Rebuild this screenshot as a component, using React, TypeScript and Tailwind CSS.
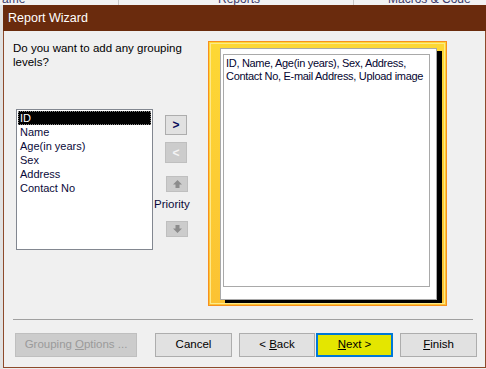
import { ReactNode } from "react";

function WinButton({
  children,
  className = "",
}: {
  children: ReactNode;
  className?: string;
}) {
  return (
    <div
      className={`flex h-[24px] items-center justify-center border text-[11.5px] ${className}`}
    >
      {children}
    </div>
  );
}

function ArrowIcon({ up }: { up: boolean }) {
  return (
    <svg width="9" height="8" viewBox="0 0 9 8">
      {up ? (
        <path d="M4.5 0 L9 4.5 L6.5 4.5 L6.5 8 L2.5 8 L2.5 4.5 L0 4.5 Z" fill="#8c8c8c" />
      ) : (
        <path d="M4.5 8 L9 3.5 L6.5 3.5 L6.5 0 L2.5 0 L2.5 3.5 L0 3.5 Z" fill="#8c8c8c" />
      )}
    </svg>
  );
}

export default function App() {
  const fields = ["ID", "Name", "Age(in years)", "Sex", "Address", "Contact No"];

  return (
    <div className="relative h-[369px] w-[486px] overflow-hidden bg-[#ececec] font-['Liberation_Sans',sans-serif] text-black">
      {/* application behind the dialog */}
      <div className="absolute left-0 top-0 h-[5px] w-[486px] overflow-hidden bg-[#f2f2f2]">
        <span className="absolute left-[2px] top-[-10px] text-[12px] text-[#3b3b6b]">ame</span>
        <div className="absolute left-[118px] top-0 h-[5px] w-px bg-[#c8c8c8]" />
        <span className="absolute left-[218px] top-[-10px] text-[12px] text-[#3b3b6b]">Reports</span>
        <div className="absolute left-[353px] top-0 h-[5px] w-px bg-[#c8c8c8]" />
        <span className="absolute left-[388px] top-[-10px] text-[12px] text-[#3b3b6b]">Macros &amp; Code</span>
      </div>
      <div className="absolute left-0 top-[5px] h-[364px] w-[3px] bg-[#e2e2e2]" />

      {/* dialog window */}
      <div className="absolute left-[3px] top-[5px] flex h-[363px] w-[483px] flex-col border-x border-b border-[#8d4a2b] bg-[#f0f0f0]">
        <div className="-mx-px flex h-[26px] items-center bg-[#6a2b0d] pl-[5px] text-[12.5px] text-white">
          Report Wizard
        </div>

        <div className="flex pt-[10px]">
          <div className="w-[204px]">
            <p className="ml-[9px] w-[180px] text-[11.5px] leading-[14px]">
              Do you want to add any grouping levels?
            </p>
            <div className="mt-[40px] flex">
              <div className="ml-[12px] h-[141px] w-[137px] border border-[#828790] bg-white p-px text-[11px] leading-[14px]">
                {fields.map((f, i) => (
                  <div
                    key={f}
                    className={`h-[14px] pl-[2px] ${
                      i === 0 ? "bg-black text-white outline-1 outline-dotted outline-[#888] -outline-offset-1" : "text-[#0a0a3a]"
                    }`}
                  >
                    {f}
                  </div>
                ))}
              </div>
              <div className="flex flex-col">
                <div className="ml-[12px] mt-[6px] flex h-[20px] w-[22px] items-center justify-center border border-[#adadad] bg-[#e1e1e1] text-[12px] font-bold text-[#0a0a5a]">
                  &gt;
                </div>
                <div className="ml-[12px] mt-[7px] flex h-[21px] w-[22px] items-center justify-center border border-[#bfbfbf] bg-[#cccccc] text-[12px] font-bold text-[#f4f4f4]">
                  &lt;
                </div>
                <div className="ml-[13px] mt-[13px] flex h-[16px] w-[22px] items-center justify-center border border-[#bfbfbf] bg-[#cccccc]">
                  <ArrowIcon up />
                </div>
                <div className="ml-px mt-[5px] text-[11.5px] leading-[14px] text-[#0a0a3a]">Priority</div>
                <div className="ml-[13px] mt-[10px] flex h-[16px] w-[22px] items-center justify-center border border-[#bfbfbf] bg-[#cccccc]">
                  <ArrowIcon up={false} />
                </div>
              </div>
            </div>
          </div>

          {/* report preview */}
          <div className="h-[265px] w-[239px] border border-[#f7901e] bg-gradient-to-b from-[#fdd835] to-[#fbc233] p-px">
            <div className="h-full w-full border border-[#fde98a] pl-[9px] pt-[4px]">
              <div className="h-[252px] w-[217px] border border-[#a9a9a9] bg-white pl-[2px] pt-[5px] shadow-[5px_3px_0_#000]">
                <div className="h-[233px] w-[207px] border border-[#a9a9a9] pl-[2px] pt-[2px] text-[11px] leading-[13px] tracking-[-0.3px] text-[#050530]">
                  ID, Name, Age(in years), Sex, Address, Contact No, E-mail Address, Upload image
                </div>
              </div>
            </div>
          </div>
        </div>

        <div className="ml-[9px] mt-[13px] h-px w-[460px] bg-[#a0a0a0]" />

        <div className="mt-[13px] flex">
          <WinButton className="ml-[11px] w-[122px] border-[#bfbfbf] bg-[#cccccc] text-[#9a9a9a]">
            Grouping <span className="ml-[3px] underline">O</span>ptions ...
          </WinButton>
          <WinButton className="ml-[18px] w-[77px] border-[#adadad] bg-[#e1e1e1]">Cancel</WinButton>
          <WinButton className="ml-[7px] w-[76px] border-[#adadad] bg-[#e1e1e1]">
            &lt;&nbsp;<span className="underline">B</span>ack
          </WinButton>
          <WinButton className="ml-px w-[77px] border-2 border-[#0078d7] bg-[#e4e600]">
            <span className="underline">N</span>ext &gt;
          </WinButton>
          <WinButton className="ml-[7px] w-[77px] border-[#adadad] bg-[#e1e1e1]">
            <span className="underline">F</span>inish
          </WinButton>
        </div>
      </div>
    </div>
  );
}
